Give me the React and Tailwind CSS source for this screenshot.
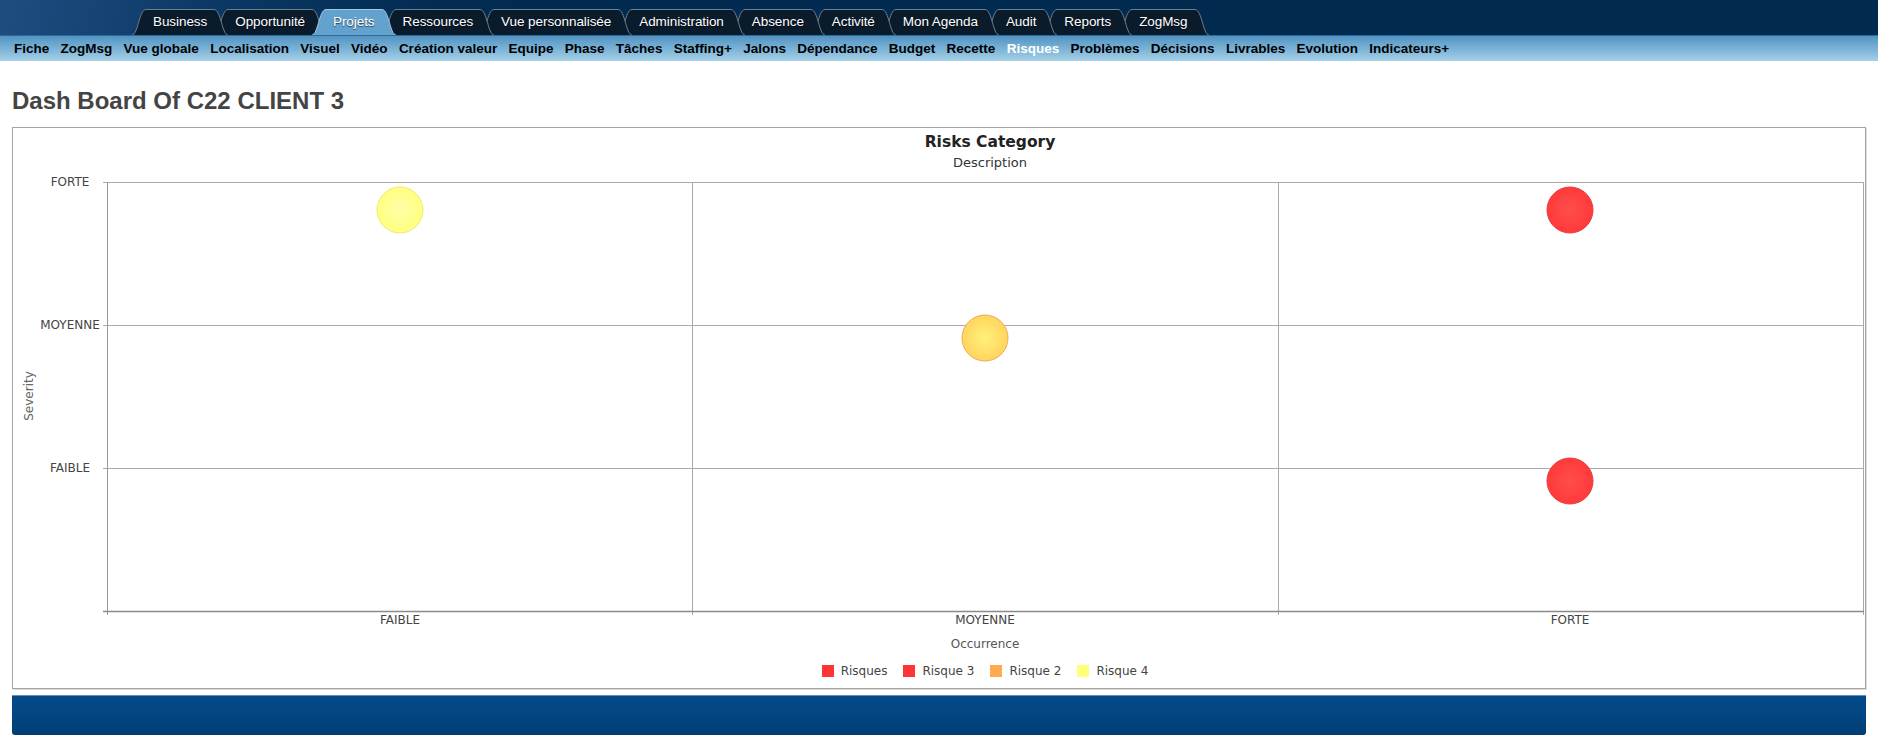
import React from "react";

const tabs = [
  { label: "Business", z: "z-[20]" },
  { label: "Opportunité", z: "z-[19]" },
  { label: "Projets", z: "z-[30]", active: true },
  { label: "Ressources", z: "z-[17]" },
  { label: "Vue personnalisée", z: "z-[16]" },
  { label: "Administration", z: "z-[15]" },
  { label: "Absence", z: "z-[14]" },
  { label: "Activité", z: "z-[13]" },
  { label: "Mon Agenda", z: "z-[12]" },
  { label: "Audit", z: "z-[11]" },
  { label: "Reports", z: "z-[10]" },
  { label: "ZogMsg", z: "z-[9]" },
];

const subItems = [
  "Fiche", "ZogMsg", "Vue globale", "Localisation", "Visuel", "Vidéo",
  "Création valeur", "Equipe", "Phase", "Tâches", "Staffing+", "Jalons",
  "Dépendance", "Budget", "Recette", "Risques", "Problèmes", "Décisions",
  "Livrables", "Evolution", "Indicateurs+",
];

function Tab({ label, z, active, first }) {
  const fill = active ? "#63a2ce" : "#0a1b2c";
  const stroke = active ? "#9cc8e4" : "#6b7f90";
  return (
    <div className={`relative flex h-[26px] ${z} ${first ? "" : "-ml-[14px]"}`}>
      <svg width="14" height="26" viewBox="0 0 14 26" className="block shrink-0">
        <path d="M0,26 C6,26 7,0.5 14,0.5 L14,26 Z" fill={fill} />
        <path d="M0,26 C6,26 7,0.5 14,0.5" fill="none" stroke={stroke} strokeWidth="1" />
      </svg>
      <div
        className={`flex items-center px-[7px] border-t text-white text-[13.5px] tracking-[-0.07px] font-['Liberation_Sans',Arial,sans-serif] [text-shadow:0_1px_1px_rgba(0,0,0,0.6)] ${
          active ? "bg-[#63a2ce] border-[#9cc8e4]" : "bg-[#0a1b2c] border-[#6b7f90]"
        }`}
      >
        {label}
      </div>
      <svg width="14" height="26" viewBox="0 0 14 26" className="block shrink-0">
        <path d="M0,0.5 C7,0.5 8,26 14,26 L0,26 Z" fill={fill} />
        <path d="M0,0.5 C7,0.5 8,26 14,26" fill="none" stroke={stroke} strokeWidth="1" />
      </svg>
    </div>
  );
}

function Bubble({ cx, cy, id, inner, outer, stroke }) {
  return (
    <g>
      <defs>
        <radialGradient id={id} cx="50%" cy="50%" r="50%">
          <stop offset="0%" stopColor={inner} />
          <stop offset="100%" stopColor={outer} />
        </radialGradient>
      </defs>
      <circle cx={cx} cy={cy} r="23" fill={`url(#${id})`} stroke={stroke} strokeWidth="1" />
    </g>
  );
}

function Chart() {
  const L = 94, R = 1850, T = 12, B = 441;
  const rows = [12, 155, 298];
  const cols = [679, 1265];
  const lbl = { fontFamily: "'DejaVu Sans', Verdana, sans-serif", fontSize: 12, fill: "#444" };
  return (
    <svg width="1853" height="486" viewBox="0 0 1853 486" className="block">
      {rows.map((y) => (
        <line key={y} x1={L - 4} x2={R} y1={y + 0.5} y2={y + 0.5} stroke="#aaaaaa" strokeWidth="1" />
      ))}
      {cols.map((x) => (
        <line key={x} x1={x + 0.5} x2={x + 0.5} y1={T} y2={B + 4} stroke="#aaaaaa" strokeWidth="1" />
      ))}
      <line x1={L + 0.5} x2={L + 0.5} y1={T} y2={B + 4} stroke="#999999" strokeWidth="1" />
      <line x1={R + 0.5} x2={R + 0.5} y1={T} y2={B + 4} stroke="#aaaaaa" strokeWidth="1" />
      <line x1={L - 4} x2={R + 1} y1={B + 0.5} y2={B + 0.5} stroke="#8a8a8a" strokeWidth="1.6" />

      <text x="57" y={T + 4} textAnchor="middle" style={lbl}>FORTE</text>
      <text x="57" y={155 + 4} textAnchor="middle" style={lbl}>MOYENNE</text>
      <text x="57" y={298 + 4} textAnchor="middle" style={lbl}>FAIBLE</text>

      <text x="387" y="454" textAnchor="middle" style={lbl}>FAIBLE</text>
      <text x="972" y="454" textAnchor="middle" style={lbl}>MOYENNE</text>
      <text x="1557" y="454" textAnchor="middle" style={lbl}>FORTE</text>

      <text
        x="16"
        y="226"
        textAnchor="middle"
        transform="rotate(-90 16 226)"
        dominantBaseline="middle"
        style={{ ...lbl, fill: "#666" }}
      >
        Severity
      </text>
      <text x="972" y="478" textAnchor="middle" style={{ ...lbl, fill: "#555" }}>Occurrence</text>

      <Bubble id="b1" cx={387} cy={40} inner="#ffffa8" outer="#ffff80" stroke="#eeea70" />
      <Bubble id="b2" cx={1557} cy={40} inner="#ff4d4d" outer="#ff3a3a" stroke="#e83a3a" />
      <Bubble id="b3" cx={972} cy={168} inner="#fff27a" outer="#ffd45e" stroke="#f0a857" />
      <Bubble id="b4" cx={1557} cy={311} inner="#ff4d4d" outer="#ff3a3a" stroke="#e83a3a" />
    </svg>
  );
}

const legend = [
  { label: "Risques", color: "bg-[#ff3535]" },
  { label: "Risque 3", color: "bg-[#ff3535]" },
  { label: "Risque 2", color: "bg-[#ffaa50]" },
  { label: "Risque 4", color: "bg-[#ffff7a]" },
];

export default function App() {
  return (
    <div className="w-[1878px] min-h-[740px] bg-white font-['Liberation_Sans',Arial,sans-serif]">
      <div className="h-[35px] flex items-end pl-[132px] bg-[linear-gradient(100deg,#1f4d80_0%,#0a3764_12%,#022b51_24%,#012a4f_100%)]">
        {tabs.map((t, i) => (
          <Tab key={t.label} {...t} first={i === 0} />
        ))}
      </div>
      <div className="h-[26px] flex items-center gap-[11.3px] pl-[14px] border-t border-[#2d6a9c] bg-[linear-gradient(180deg,#5393c2_0%,#7db5d8_55%,#a7d0e7_100%)]">
        {subItems.map((s) => (
          <span
            key={s}
            className={`text-[13.5px] font-bold leading-none ${
              s === "Risques" ? "text-white" : "text-black"
            }`}
          >
            {s}
          </span>
        ))}
      </div>

      <div className="px-[12px]">
        <h1 className="mt-[26px] text-[24px] leading-[27px] font-bold text-[#444444]">
          Dash Board Of C22 CLIENT 3
        </h1>

        <div className="mt-[13px] h-[562px] border border-[#a4a4a4] shadow-[1px_1px_0_#dddddd] flex flex-col items-center">
          <div className="pl-[102px] mt-[6px] text-[15.5px] leading-[17px] font-bold text-[#222] font-['DejaVu_Sans',Verdana,sans-serif]">
            Risks Category
          </div>
          <div className="pl-[102px] mt-[4px] text-[13px] leading-[15px] text-[#333] font-['DejaVu_Sans',Verdana,sans-serif]">
            Description
          </div>
          <div className="self-start">
            <Chart />
          </div>
          <div className="pl-[92px] mt-[8px] flex items-center gap-[16px] text-[12px] leading-[14px] text-[#444] font-['DejaVu_Sans',Verdana,sans-serif]">
            {legend.map((l) => (
              <div key={l.label} className="flex items-center gap-[7px]">
                <span className={`w-[12px] h-[12px] ${l.color}`} />
                <span>{l.label}</span>
              </div>
            ))}
          </div>
        </div>

        <div className="mt-[6px] h-[40px] rounded-b-[3px] border-t border-[#5f8fbf] bg-[linear-gradient(180deg,#034a8a_0%,#02447f_60%,#013d74_100%)]" />
      </div>
    </div>
  );
}
